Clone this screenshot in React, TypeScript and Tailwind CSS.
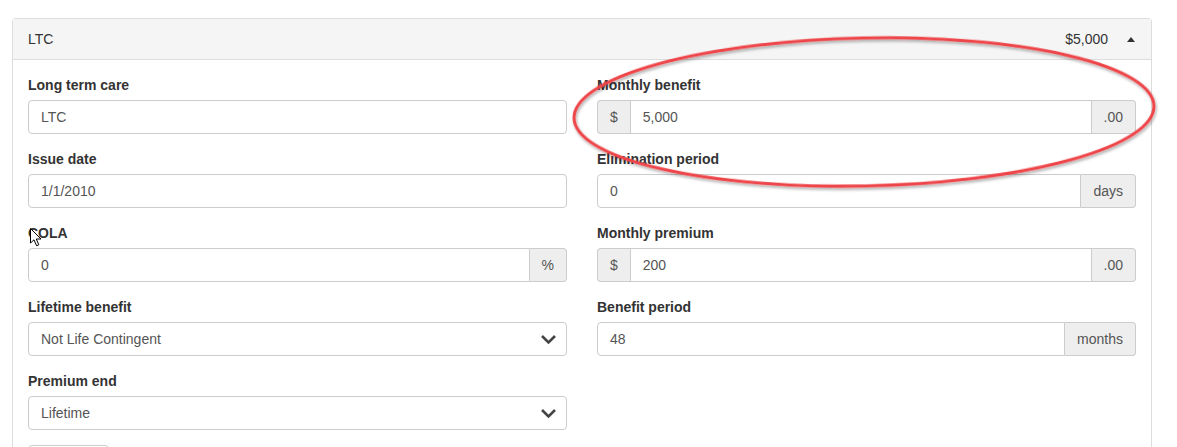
import React from 'react';

const font = { fontFamily: '"Liberation Sans", Arial, sans-serif' };

const Label: React.FC<{ text: string }> = ({ text }) => (
  <label className="mb-[5px] block text-[14px] font-bold leading-[20px] text-[#333]">{text}</label>
);

const Addon: React.FC<{ text: string; side: 'left' | 'right' }> = ({ text, side }) => (
  <span
    className={`flex items-center border border-[#ccc] bg-[#eee] px-3 text-[14px] text-[#555] ${
      side === 'left' ? 'rounded-l-[4px] border-r-0' : 'rounded-r-[4px] border-l-0'
    }`}
  >
    {text}
  </span>
);

interface FieldProps {
  label: string;
  value: string;
  prefix?: string;
  suffix?: string;
}

const TextField: React.FC<FieldProps> = ({ label, value, prefix, suffix }) => (
  <div className="mb-[15px]">
    <Label text={label} />
    <div className="flex h-[34px]">
      {prefix && <Addon text={prefix} side="left" />}
      <div
        className={`flex flex-1 items-center border border-[#ccc] bg-white px-3 text-[14px] text-[#555] ${
          prefix ? '' : 'rounded-l-[4px]'
        } ${suffix ? '' : 'rounded-r-[4px]'}`}
      >
        {value}
      </div>
      {suffix && <Addon text={suffix} side="right" />}
    </div>
  </div>
);

const SelectField: React.FC<{ label: string; value: string }> = ({ label, value }) => (
  <div className="mb-[15px]">
    <Label text={label} />
    <div className="flex h-[34px] items-center justify-between rounded-[4px] border border-[#ccc] bg-white pl-3 pr-[9px] text-[14px] text-[#555]">
      <span>{value}</span>
      <svg width="17" height="11" viewBox="0 0 17 11">
        <path d="M2 2 L8.5 8.5 L15 2" fill="none" stroke="#444" strokeWidth="2.6" />
      </svg>
    </div>
  </div>
);

export default function App() {
  return (
    <div className="relative h-[447px] overflow-hidden bg-white pl-3 pt-[18px]" style={font}>
      <div className="w-[1140px] rounded-t-[4px] border border-b-0 border-[#ddd]">
        <div className="flex h-[41px] items-center justify-between border-b border-[#ddd] bg-[#f5f5f5] px-[15px] text-[14px] text-[#333]">
          <span>LTC</span>
          <div className="flex items-center gap-[19px]">
            <span>$5,000</span>
            <svg width="8" height="5" viewBox="0 0 8 5" className="mr-[1px]">
              <path d="M0 5 L4 0 L8 5 Z" fill="#333" />
            </svg>
          </div>
        </div>
        <div className="grid grid-cols-2 gap-x-[30px] px-[15px] pt-[15px]">
          <div>
            <TextField label="Long term care" value="LTC" />
            <TextField label="Issue date" value="1/1/2010" />
            <TextField label="COLA" value="0" suffix="%" />
            <SelectField label="Lifetime benefit" value="Not Life Contingent" />
            <SelectField label="Premium end" value="Lifetime" />
            <button
              aria-label="Save"
              className="block h-[34px] w-[81px] rounded-[4px] border border-[#ccc] bg-white"
            />
          </div>
          <div>
            <TextField label="Monthly benefit" value="5,000" prefix="$" suffix=".00" />
            <TextField label="Elimination period" value="0" suffix="days" />
            <TextField label="Monthly premium" value="200" prefix="$" suffix=".00" />
            <TextField label="Benefit period" value="48" suffix="months" />
          </div>
        </div>
      </div>

      {/* annotation ellipse */}
      <svg className="pointer-events-none absolute left-0 top-0" width="1177" height="447">
        <defs>
          <filter id="sh" x="-10%" y="-10%" width="120%" height="130%">
            <feDropShadow dx="1" dy="2" stdDeviation="1.5" floodColor="#000" floodOpacity="0.35" />
          </filter>
        </defs>
        <ellipse
          cx="864"
          cy="112"
          rx="290"
          ry="74"
          fill="none"
          stroke="#ee4448"
          strokeWidth="3"
          transform="rotate(-1.2 864 112)"
          filter="url(#sh)"
        />
      </svg>

      {/* mouse cursor */}
      <svg className="pointer-events-none absolute left-[30px] top-[228px]" width="13" height="19" viewBox="0 0 13 19">
        <path
          d="M0.5 0.5 L0.5 15 L4 11.8 L6.6 17.8 L8.8 16.8 L6.3 11 L11 11 Z"
          fill="#fff"
          stroke="#000"
          strokeWidth="1"
          strokeLinejoin="round"
        />
      </svg>
    </div>
  );
}
